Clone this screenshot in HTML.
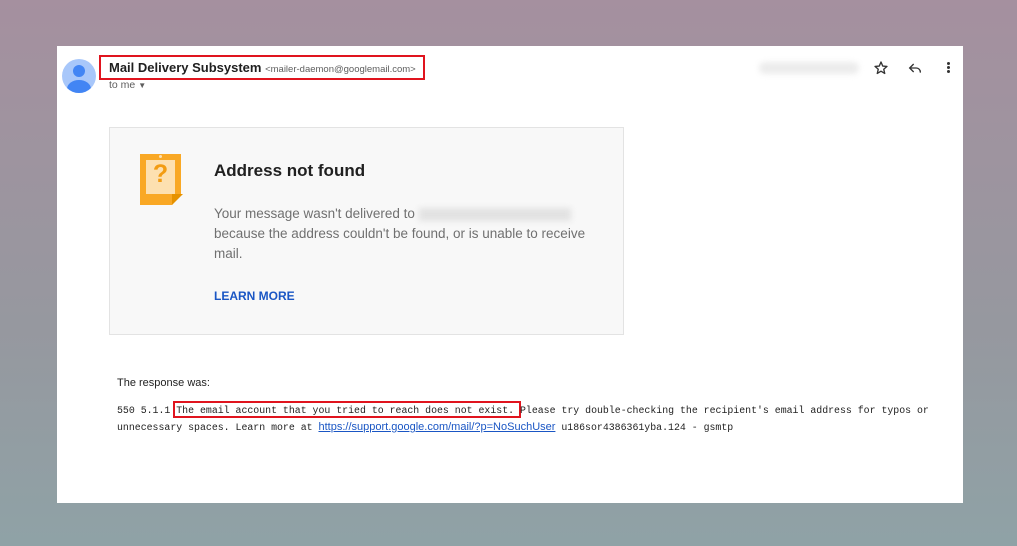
<!DOCTYPE html>
<html><head><meta charset="utf-8"><style>
body{margin:0;width:1017px;height:546px;background:linear-gradient(#a5909f,#96989f 60%,#8fa2a6);position:relative;overflow:hidden;font-family:"Liberation Sans",Arial,sans-serif}
.card{position:absolute;left:57px;top:46px;width:906px;height:457px;background:#fff}
.abs{position:absolute}
.red{border:2px solid #e0141e}
.mono{font-family:"Liberation Mono",monospace;font-size:9.9px;color:#222;white-space:nowrap}
</style></head><body>
<div class="card">
 <div class="abs" style="left:5px;top:13px;width:34px;height:34px;border-radius:50%;background:#a8c7fa;overflow:hidden">
  <div class="abs" style="left:11px;top:6px;width:12px;height:12px;border-radius:50%;background:#4285f4"></div>
  <div class="abs" style="left:5px;top:21px;width:24px;height:18px;border-radius:50%;background:#4285f4"></div>
 </div>
 <div class="abs red" style="left:42px;top:9px;width:322px;height:21px"></div>
 <div class="abs" style="left:52px;top:14px;font-size:13px;font-weight:bold;color:#1f1f1f;white-space:nowrap">Mail Delivery Subsystem <span style="font-weight:normal;font-size:9.5px;color:#5e5e5e">&lt;mailer-daemon@googlemail.com&gt;</span></div>
 <div class="abs" style="left:52px;top:33px;font-size:10.5px;color:#5e5e5e">to me <span style="font-size:8px">▼</span></div>
 <div class="abs" style="left:702px;top:16px;width:100px;height:12px;background:#ececec;filter:blur(3px);border-radius:6px"></div>
 <svg class="abs" style="left:816px;top:14px" width="16" height="16" viewBox="0 0 24 24"><path d="M12 3l2.6 6.1 6.4.5-4.9 4.2 1.5 6.4L12 16.8 6.4 20.2l1.5-6.4L3 9.6l6.4-.5z" fill="none" stroke="#333" stroke-width="2" stroke-linejoin="round"/></svg>
 <svg class="abs" style="left:850px;top:14px" width="16" height="16" viewBox="0 0 24 24"><path d="M10 6L4 12l6 6M4 12h10a6 6 0 0 1 6 6v1" fill="none" stroke="#333" stroke-width="2"/></svg>
 <div class="abs" style="left:890px;top:16px;width:3px;height:3px;border-radius:50%;background:#333;box-shadow:0 4px #333,0 8px #333"></div>

 <div class="abs" style="left:52px;top:81px;width:513px;height:206px;background:#f8f8f8;border:1px solid #e3e3e3">
  <div class="abs" style="left:30px;top:26px;width:41px;height:51px;background:#f9a825;clip-path:polygon(0 0,100% 0,100% 78%,78% 100%,0 100%)"></div>
  <div class="abs" style="left:36px;top:32px;width:29px;height:34px;background:#fde0b0"></div>
  <div class="abs" style="left:49px;top:27px;width:3px;height:3px;border-radius:50%;background:#fde0b0"></div>
  <div class="abs" style="left:39px;top:32px;width:23px;text-align:center;font-size:25px;font-weight:bold;color:#f39c12">?</div>
  <div class="abs" style="left:62px;top:66px;width:11px;height:11px;background:#e69200;clip-path:polygon(100% 0,0 100%,0 0)"></div>
  <div class="abs" style="left:104px;top:33px;font-size:17px;font-weight:bold;color:#202020">Address not found</div>
  <div class="abs" style="left:104px;top:76px;width:380px;font-size:13.5px;line-height:20px;color:#707070">Your message wasn't delivered to <span style="display:inline-block;width:152px;height:13px;background:#e2e2e2;filter:blur(3px);vertical-align:middle"></span><br>because the address couldn't be found, or is unable to receive<br>mail.</div>
  <div class="abs" style="left:104px;top:161px;font-size:12px;font-weight:bold;color:#1a56c4">LEARN MORE</div>
 </div>

 <div class="abs" style="left:60px;top:331px;font-size:11px;color:#222">The response was:</div>
 <div class="abs red" style="left:116px;top:355px;width:344px;height:13px"></div>
 <div class="abs mono" style="left:60px;top:356px;line-height:17px">550 5.1.1 The email account that you tried to reach does not exist. Please try double-checking the recipient's email address for typos or<br>unnecessary spaces. Learn more at <span style="font-family:'Liberation Sans',sans-serif;font-size:11px;color:#1a56c4;text-decoration:underline">https://support.google.com/mail/?p=NoSuchUser</span> u186sor4386361yba.124 - gsmtp</div>
</div>
</body></html>
